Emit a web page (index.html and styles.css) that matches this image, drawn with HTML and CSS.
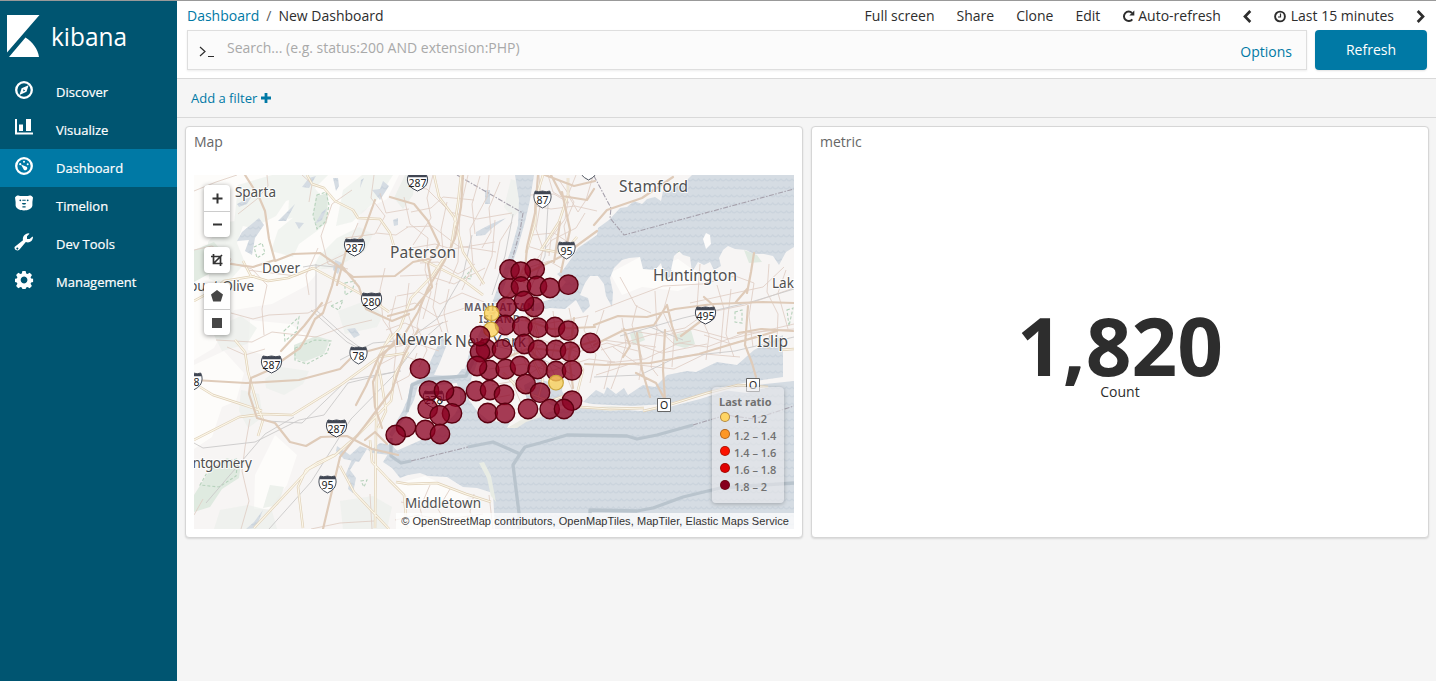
FILE: index.html
```html
<!DOCTYPE html>
<html lang="en">
<head>
<meta charset="utf-8">
<title>New Dashboard - Kibana</title>
<link rel="stylesheet" href="styles.css">
</head>
<body>
<div class="app">
  <aside class="sidebar">
    <div class="brand">
      <svg class="brand-mark" width="33" height="42" viewBox="0 0 33 42"><path fill="#fff" d="M0 0H32.500L0 37.500zM18.500 22.500C25.500 27 31 34 32 42H2z"/></svg>
      <svg class="brand-name" width="84" height="36" viewBox="0 0 84 36"><text x="0" y="24" textLength="76" lengthAdjust="spacingAndGlyphs">kibana</text></svg>
    </div>
    <nav class="menu">
      <a class="menu-item"><svg width="18" height="18" viewBox="0 0 18 18"><circle cx="9" cy="9" r="7.800" fill="none" stroke="#fff" stroke-width="2.300"/><path fill="#fff" fill-rule="evenodd" d="M13.600 4.200 11.500 10.800 4.500 14 6.600 7.200zM8.300 8.200v2.300l2-1.100z"/></svg><span>Discover</span></a>
      <a class="menu-item"><svg width="18" height="18" viewBox="0 0 18 18"><path fill="#fff" d="M0 0h2v13.500h16V15.500H0zM4 5.500h4V12H4zM11 0h5v12h-5z"/></svg><span>Visualize</span></a>
      <a class="menu-item active"><svg width="18" height="18" viewBox="0 0 18 18"><circle cx="9" cy="9" r="7.800" fill="none" stroke="#fff" stroke-width="2.300"/><g fill="#fff"><circle cx="9" cy="4.700" r="1"/><circle cx="5.200" cy="7.200" r="1.100"/><circle cx="12.700" cy="7.200" r="1"/><path d="M6 7.500 12 10a2.200 2.200 0 0 1-3 3z"/></g></svg><span>Dashboard</span></a>
      <a class="menu-item"><svg width="18" height="18" viewBox="0 0 18 18"><path fill="#fff" d="M0 2.500C1 .2 4 0 5 1h8c1-1 4-.8 5 1.500L17.400 7v3.500c-.6 3.500-4.400 4.900-8.400 4.900S1.200 14 .6 10.500V7z"/><g fill="#005571"><circle cx="5.300" cy="5.300" r=".9"/><circle cx="12.700" cy="5.300" r=".9"/><path d="M7.300 4.800h3.400v.9H7.300zM6.800 8h4.400l-1 1.600H7.800zM7.400 11.300h3.200v1.100H7.400z"/></g></svg><span>Timelion</span></a>
      <a class="menu-item"><svg width="18" height="18" viewBox="0 0 18 18"><path fill="#fff" fill-rule="evenodd" d="M13.500.2 14.500.8 12 3.300V6h2.600L17.500 3.400 18 4.300C17.700 8 14.500 10.400 10.800 9L4.500 16.500C2 19-1.500 16-.2 13.800L8 7.300C7.300 3.500 9.800.5 13.500.2zM2.300 14.600a1 1 0 1 0 .1 0z"/></svg><span>Dev Tools</span></a>
      <a class="menu-item"><svg width="18" height="18" viewBox="0 0 18 18"><path fill="#fff" fill-rule="evenodd" d="M7.400 0h3.200l.6 2.500 1.300.6 2.200-1.300 2.300 2.200-1.400 2.200.5 1.300 2 .3v3.100l-2 .6-.5 1.300 1.300 2.200-2.200 2.200-2.200-1.300-1.300.5-.6 1.600H7.400l-.6-1.600-1.300-.5-2.200 1.300-2.200-2.200 1.300-2.200-.6-1.300L0 10.900V7.800l1.800-.3.600-1.300L1.100 4l2.200-2.200 2.200 1.300 1.300-.6zM9 5.600a3.400 3.400 0 1 0 .1 0z"/></svg><span>Management</span></a>
    </nav>
  </aside>

  <main class="content">
    <header class="topbar">
      <div class="nav-row">
        <div class="crumbs"><a>Dashboard</a><i>/</i><span>New Dashboard</span></div>
        <div class="actions">
          <span>Full screen</span><span>Share</span><span>Clone</span><span>Edit</span>
          <span class="with-icon"><svg width="13" height="13" viewBox="0 0 13 13"><path d="M10.300 9.300A4.700 4.700 0 1 1 10 3" fill="none" stroke="#2d2d2d" stroke-width="2"/><path d="M12.300.6v5H7.300z" fill="#2d2d2d"/></svg>Auto-refresh</span>
          <svg class="chev" width="9" height="13" viewBox="0 0 9 13"><path d="M7.300 1 2 6.500 7.300 12" fill="none" stroke="#2d2d2d" stroke-width="2.700"/></svg>
          <span class="with-icon time"><svg width="12" height="13" viewBox="0 0 12 13"><circle cx="6" cy="6.500" r="4.900" fill="none" stroke="#2d2d2d" stroke-width="1.900"/><path d="M6.500 3.500V7H4" fill="none" stroke="#2d2d2d" stroke-width="1.200"/></svg>Last 15 minutes</span>
          <svg class="chev" width="9" height="13" viewBox="0 0 9 13"><path d="M1.700 1 7 6.500 1.700 12" fill="none" stroke="#2d2d2d" stroke-width="2.700"/></svg>
        </div>
      </div>
      <div class="search-row">
        <div class="search">
          <svg class="prompt" width="16" height="12" viewBox="0 0 16 12"><path d="M1 1 6 5.500 1 10M9 10.500h6" fill="none" stroke="#2d2d2d" stroke-width="1.200"/></svg>
          <span class="hint">Search... (e.g. status:200 AND extension:PHP)</span>
          <a class="options">Options</a>
        </div>
        <button class="refresh">Refresh</button>
      </div>
    </header>
    <div class="filters"><a>Add a filter <svg width="10" height="10" viewBox="0 0 10 10"><path d="M5 0v10M0 5h10" stroke="#0079a5" stroke-width="2.800"/></svg></a></div>

    <div class="panels">
      <section class="panel">
        <h2>Map</h2>
        <div class="map">
          <svg class="map-canvas" width="600" height="354" viewBox="194 175 600 354">
            <defs>
              <pattern id="waves" width="11" height="16" patternUnits="userSpaceOnUse"><rect width="11" height="16" fill="#d5dce3"/><path d="M0 3q2.750 3.500 5.500 0q2.750 3.500 5.500 0M-2.750 11q2.750 3.500 5.500 0q2.750 3.500 5.500 0q2.750 3.500 5.500 0" fill="none" stroke="#cbd4dd" stroke-width="1.300"/></pattern>
              <g id="shieldShape"><path d="M-8.500-8Q-4.500-6.500 0-8Q4.500-6.500 8.500-8Q12-2 8 4Q5 7 0 9Q-5 7-8 4Q-12-2-8.500-8z" fill="#fff" stroke="#404653" stroke-width="1"/><path d="M-8.500-8Q-4.500-6.500 0-8Q4.500-6.500 8.500-8L9.500-4.800H-9.500z" fill="#404653"/></g>
              <g id="dot"><circle r="9.700"/></g>
              <g id="parkways">
                <path d="M307 175l5 9 12 4 11 13 18 9 5 8 22 1 10 14 5 17M243 261l8 15 17 5 20-3 25-10 24 13 35 19 17 12M194 301l20-11 10-9 31-5M235 340l10 12 3 20 10 36 5 12-5 16M194 440l45-23 24-3 29 1 50-31 37-27 28-4M200 387l13 8 25 8 24 8M434 175l5 22 15 20 9 35 21 32M400 250l29 13 34 17 20 15M461 175l-3 28-7 45-19 28-21 22-11 30-16 18M391 334l-14 26 4 19 5 32-8 17M408 352l-13 22-4 27-33 34-24 21-25 13-55 59M334 455l-17 8-11 7-8 17 5 41M340 466l14 26 35 37M377 370l-1 60-1 98M396 482l12 2 29-1 29 11 25 8M370 440l2 22 17 18 15 15 3 33M543 175l-7 23-1 26-9 29M568 178v17l-9 27-18 28M540 249l23 4 14-16M530 310l8 25-5 25 10 20-5 19M503 373l19 18 28 10 25-9M574 356l9 14-6 24M643 411l22-5 42-13 31-8 30 2M580 407l30 2 34-1M780 350l14-1"/>
              </g>
            </defs>
            <rect x="194" y="175" width="600" height="354" fill="#f7f5f4"/>

            <!-- open country and woodland -->
            <g fill="#fdfcfa">
              <path d="M194 175h205l-12 24-25 12-14 36-20 14-22 25-34 18-38 6-20 38-20 12z"/>
              <path d="M194 365l30-14 20 22-8 28-14 6-10 30-18 12zM255 475l20-40 22 20-10 30-18 24h-15zM250 320l40 4 26 16-36 20-32-10zM640 257l18 10 20-8 14 10 20 8-34 14-36-4-20 8-12-22zM395 484l30-8 44 20-10 10-50-8z"/>
            </g>
            <g fill="#e9eee9">
              <path d="M238 185l34-10h56l-17 17-25 9-10 15-24 12-18-4zM278 230l28-23 23-7-8 28-22 16-6 13-22-6zM290 177l18 3 14 17-19 18-15 4zM343 190l19-15h31l-16 25-25 22-16 4zM319 256l18-18 22-11 14 7-8 17-30 17-23 2zM208 242l18-20 19-2-8 23 8 20-19 22-17-6z" opacity=".6"/>
              <path d="M338 311l30-11 15 15-6 12-32 7zM211 329l30-13 16 12-10 16-25 7zM265 379l16-12 28 4-6 13-19 11-18-7zM241 390l18 4 4 23-15 11-9-17zM340 501l33-5 19 11-5 22h-44zM220 510l28-5 24 6 5 18h-63zM511 179l8 3 4 24-10 12-9-11z" opacity=".6"/>
              <path d="M405 175h10l-2 20-10 14-9-11zM270 485l14 2-6 18-15 3z" opacity=".8"/>
              <path d="M316 196l12-3-1 30-10 6-4-14zM674 335l17-5 4 14-10 4-11-3zM630 334l11-4 4 10-12 5zM744 250l13 5 5 7-13 1zM294 345l22-9 14 4-6 14-20 8-10-4z" fill="#e0eae1"/>
              <path d="M194 495l16-25 17-12 14 5-2 15-17 11-12 18-16 5z" fill="#dfeae0"/>
              <path d="M194 250l20-8 10 12-8 16-22 12z" fill="#e2ebe2"/>
            </g>
            <g fill="none" stroke="#b7d2bc" stroke-width="1.100" stroke-dasharray="3 2">
              <path d="M317 195l9-3 3 13-3 16-9 8-4-14zM254 247l8-4 3 10-8 5zM284 331l15-14-2 14-12 10zM295 348l20-8 16 1-4 12-20 11-12-4zM345 283l10-2-3 10-7 4zM331 306l12-6-4 10zM200 485l8-14 18-10 12-2-2 17-17 11zM673 240l9 2v8l-7 3zM787 310l6-2-4 18zM735 312l7-2v13l-7-1zM464 278l7-8v9zM361 481l6-1-3 7z"/>
            </g>

            <!-- lakes, rivers, bays and ocean -->
            <g fill="url(#waves)">
              <path d="M692 175H794V247L786 252 779 265 773 256 764 254 754 254 746 250 735 249 728 246 723 250 719 258 721 266 714 270 710 262 704 265 698 262 692 272 690 257 683 255 679 251 674 256 671 270 676 273 665 280 661 263 655 270 643 269 640 257 629 258 622 260 614 268 610 278 613 292 612 307 606 296 604 284 598 276 590 276 585 283 580 295 588 298 590 306 583 313 576 300 565 309 550 308 530 312 527 306 552 299 566 282 557 274 563 270 571 259 578 248 597 235 598 228 609 220 620 208 627 207 634 201 642 204 647 199 655 197 661 201 663 191 671 191 677 184 684 183z"/>
              <path d="M515 175H534L530 200 525 222 517 250 510 270 503 290 498 308 490 325 483 345 474 372 464 372 470 350 477 338 487 318 495 295 503 272 511 250 518 225 519 200z"/>
              <path d="M794 381 765 384 735 388 700 399 665 408 640 411 600 408 580 407 560 409 540 415 507 428 512 419 500 422 488 420 478 412 469 400 470 384 474 368 462 369 455 378 460 392 460 404 455 414 445 424 430 436 412 444 396 451 390 440 388 454 383 462 392 468 400 478 408 475 420 473 428 476 447 477 463 487 477 488 493 493 495 529H794z"/>
              <path d="M442 337 449 339 440 362 434 375 455 376 466 370 464 382 440 385 418 386 414 400 406 416 392 437 389 434 402 412 408 398 411 383 424 377 430 362z"/>
              <path d="M524 385l12-6 14 3 13-3-1 12 9 14-16 2-13-8-15 3zM583 402l13-12 8 4 3-7 9 7 8-6 4 7 15-10 12 2 12-12 20-4 9 1 21-10 20 3 17-15 29-15v42l-28 4-28 5-35 11-26 7-34 2-40-2z"/>
              <path d="M390 455l-18-2-5-4-8 13-15-3-8-8 1-5 13 9 10-9 11 4 9-7 10 2 8 6zM345 476l5-12 3-7 4 2-7 11 6 8-3 15-5-4 2-9z"/>
              <path d="M242 232l17-14 5 7-9 13-3 17-7-4 4-11-12 1zM302 187l7-9 7-2-7 12zM333 178l5 0 1 8-3 5zM361 180l3-2-4 10zM372 190l8-1 3-8 6 5-9 14zM315 224l7-12 5-4-5 12zM295 222l9 1-5 6zM335 260l7 3-4 11-5-4zM237 204l15-8-5 8-8 3zM278 221l17-17-9 17zM485 190h5v14h-5zM476 232l15-8 15-6-15 11-6 6-9 1zM347 329l8-1 5 7-6 3zM256 528l7-18-9 12-8 7zM393 220l5-2v7l-4 1z"/>
            </g>
            <g fill="#fdfcfb"><path d="M703 239l3-6 4 2 1 9-5 5zM723 390l15-2 13-5 18 4-22 6z"/><path d="M640 409l-30 2-30-3 32-2zM507 428l19-11 22-7-4 6-18 6-9 6z" fill="#ebebe4"/><path d="M479 463l5-1 7 14 5 26-5-6-4-18z" fill="#e8ece4"/></g>

            <!-- ferry and shipping lanes -->
            <g fill="none" stroke="#b9c4cd" stroke-width="3.300" stroke-linejoin="round">
              <path d="M391 438l0 18 10 7 10-2M407 412l5-27 14-6 40-3 8-17M468 447l25-5 27 12 5-7 15-4 27-8 60 1 10 3 20-4 36-10M520 454l-7 11 6 48v16M590 529v-19l47 1 16-3 30-11 37-9 74-5"/>
            </g>
            <g fill="none" stroke="#a6a1ac" stroke-width="1.100" stroke-dasharray="5 1.500 1.500 1.500">
              <path d="M457 175l66 38-3 18-8 29M594 176l17 32-1 10 14 17 170-46M411 461l57-14M693 425l33-10 28 4 40-13"/>
            </g>

            <!-- local streets -->
            <g fill="none" stroke="#dfcec4" stroke-width=".85">
              <path d="M194 191l22-9 21-7M267 175l1 11-11 13-19 15M194 250l18-4 19 13-3 10M231 263l21 6 15 16-5 24 2 26M231 313l22 6 16-4 39-2 24-12M318 248l-12 27 3 20M358 223l-13 31-32 15-17 7-49-6M352 190l-20 14-11 32 7 28 20 5M374 175l-3 23 14 18-10 18-30 4M376 233l20 2 12-8M380 193l6 20 23-4M385 268l-5 22 3 30 11 16M302 175l10 9-3 18"/>
              <path d="M404 197l6 27 18 14-3 32 6 22-8 27M410 187l17 2 23 23 27 7 35-6M433 175l-6 23 4 20-18 27M447 202l-6 28 3 30-8 25M468 175l-8 35-2 52-9 22M489 175l-2 22-17 32 3 36-11 25M480 176l-8 28 3 30M495 220l-3 36-12 30M406 227l26-1 26 20 38 6M412 248l23-4 17 5 43-7M400 276l26-1 28 9 31-16M397 296l22-4 21 12 22-11 22 9M411 212l20-4 12-11 31 3M500 182l-11 26 2 24-9 16M512 222l-12 19-5 28M420 263l18-1 20 12 17-10"/>
              <path d="M390 310l25-7 22 14 28-9M386 330l19-7 16 7 27-9M395 347l20-4 24 8M381 364l19-10 20 8M396 296l-7 28 7 26-2 20 8 30M409 283l-3 24 8 25-11 21M423 298l-6 28 10 24-8 17M437 283l-4 24 9 25M449 289l-5 24 4 20M392 385l17-9 8-23"/>
              <path d="M539 175l2 25-5 29 7 20-7 29M548 175l5 17 15 9-3 18-14 19-2 18M559 180l15 22-10 24 4 25M576 175l-8 20 10 17 8-12 7-24M585 213l-9 15-24 12-15 19M535 206l16 3 24-3 22 5M532 235l22-2 17 11M530 267l19-6 14 8M530 195l24-1 15 9M527 246l23 7"/>
              <path d="M491 348l42-11 45 15 29-9 31 8M489 369l35-5 27 7 38-12 26 3M492 385l28-5 25-16 24-3M501 327l14 22-4 31 10 23M518 323l4 32 15 33M536 314l-4 28 13 20-5 28M553 311l3 28-6 27 8 15M569 308l6 30-10 35 9 21M588 315l-4 15 12 25-6 28M604 310l-9 28 16 23-7 28M489 399l21-4M482 404l30 2M516 320l34 3 38-7M505 339l27 8 44-12"/>
              <path d="M601 350l49-15 35-7 21-15 39-8 49-17M607 363l38-4 34-16 28 4 37-14 50-4M596 375l34-11 44 5 31-15 35 3M622 318l4 27-9 28-6 16M637 305l-5 20 10 33-3 22M655 291l2 39-6 37 7 9M670 287l-7 25 11 24-2 31M700 264l-3 44 12 27-3 25M717 285l7 24-4 45M731 289l-5 45 8 23M754 283l-5 33 4 31M769 264l-2 28 11 22-1 26M786 270l-8 23 10 36M620 277l16 29 15 7M595 312l31-12 37-14 39-2 33-8 19 7M621 329l42 7 30-7 37 10 64-15M625 340l37 13 45-9M603 340l53 7M655 326l19 18 17-3M704 335l27 9 24-7M690 303l45-10 28-6 21-20M613 347l26 18"/>
              <path d="M216 340l36 2 20-10 44 5 30-11 26-6M227 347l18 8 20-6M250 419l-5 28-3 24 7 30-8 28M194 515l9-16M395 520l24-5 22 5 42-6M401 502l25 6 42-6M430 485l-10 23 5 20M450 489l-12 20 11 20M474 494l-4 18 8 17M370 494l2 35M311 529l29-6 34-2M489 495l4 34"/>
            </g>

            <!-- railways -->
            <g fill="none" stroke="#cbcaca" stroke-width=".9">
              <path d="M345 268l-30-3-12 2M194 443l9 5 52-6 44-22 25-5 24-32 50-12M206 503l59-69 29-17M267 421l35 2 45-43 54-9M269 529l42-47 40-63 42-43 24-31 26-23M316 264v46l31 28 19 14M311 310l36 32 19 10M340 360l33-17 35-3 30-22 25-43 9-40M594 377l46-2 37-18 58-6 59-14M650 327l18 7 15 6M620 336l63-18 68-16 43-13M513 214l-8 42-13 39M492 345l44 11 39 20M548 205l-3 51-14 31"/>
            </g>

            <use href="#parkways" class="road-edge"/>
            <use href="#parkways" class="road-fill"/>

            <!-- motorways -->
            <g class="motorway">
              <path d="M245 175l14 22 6 14 4 28 6 22 18-7 27-1 17 12 16 12 42-1 18-14 20-4M337 265l-5 21-9 27-8 6-9 19-6 10-33 23-16 7-2 16 8 24 18 5 15 19 16 4 15-9 26-1 25 13 26 6M194 380l52 3 53-3 41-11 14-14 29-8 25-5M341 265l18 22 7 22 26 12 17-7M322 303l-18 23-23 25M231 264l22 3 22-7M375 200l-13 36-16 15-9 34M390 197l24 7 14 17 11 23-11 20 4 23-18 22-26 7M463 175l-2 32-6 31-11 24-16 26-10 24-17 28-22 16-13 30-10 19M418 330l-14 25-12 35-28 37-24 30-17 72M382 428l-7-21-2-25 11-28 16-19M365 440l10-8 12 12"/>
              <path d="M526 262l-10 24-26 31M538 175l-3 38-8 34-3 35M551 175l11 21 25 4 7-11M562 192l8 38-9 42M597 231l-33 24-18 9-27 13M560 222l-6 40M545 175l29 11 21-5M594 225l13-15 35-12 31-21M526 320l25 9 44-2M500 360l30-12 31 3 34-10M528 309l2 40 19 23M574 318l-5 39 4 31M594 325l24-9 29 1 28-8 38-5 50-2 31 1M594 345l28-14 32-6 13-20 5 21 5 14M585 364l20 1 45-2 49-9 33-10 45-13M624 329l6 17-7 11M637 333l5 37 8 27M665 330l-2 40 2 30M747 293l4-21 3-19M714 307l-9 11-24 18M748 306l-3 39 7 18 4 14M770 336l-2 12M738 333l23-4 32 2M713 305l-9-8M736 302l12-14M636 373l20 10 8 15"/>
            </g>

            <g class="place">
              <text x="235" y="197" font-size="13.500" textLength="41">Sparta</text>
              <text x="390" y="257.500" font-size="15.500" textLength="66">Paterson</text>
              <text x="619" y="191.500" font-size="15.500" textLength="69">Stamford</text>
              <text x="653" y="281" font-size="15.500" textLength="84">Huntington</text>
              <text x="262" y="272.500" font-size="13.500" textLength="38">Dover</text>
              <text x="177" y="290.500" font-size="13.500" textLength="77">Mount Olive</text>
              <text x="395" y="344.500" font-size="15.500" textLength="57">Newark</text>
              <text x="455" y="347" font-size="15.500" textLength="71">New York</text>
              <text x="757" y="347" font-size="15.500" textLength="31">Islip</text>
              <text x="772" y="287.500" font-size="13.500">Lake</text>
              <text x="173" y="467.500" font-size="13.500" textLength="79">Montgomery</text>
              <text x="405" y="507.500" font-size="13.500" textLength="76">Middletown</text>
              <g class="district"><text x="464" y="311" textLength="71">MANHATTAN</text><text x="479" y="323" textLength="41">ISLAND</text></g>
            </g>
            <g class="shield">
              <g transform="translate(417.500 182)"><use href="#shieldShape"/><text y="5">287</text></g>
              <g transform="translate(542.500 199)"><use href="#shieldShape" transform="scale(.85 1)"/><text y="4.500">87</text></g>
              <g transform="translate(566.500 250)"><use href="#shieldShape" transform="scale(.85 1)"/><text y="4.500">95</text></g>
              <g transform="translate(588.500 171)"><use href="#shieldShape" transform="scale(.85 1)"/></g>
              <g transform="translate(354.500 247)"><use href="#shieldShape"/><text y="4.500">287</text></g>
              <g transform="translate(371.500 301)"><use href="#shieldShape"/><text y="4.500">280</text></g>
              <g transform="translate(358.500 355)"><use href="#shieldShape" transform="scale(.85 1)"/><text y="4.500">78</text></g>
              <g transform="translate(271.500 364)"><use href="#shieldShape"/><text y="4.500">287</text></g>
              <g transform="translate(336.500 428)"><use href="#shieldShape"/><text y="4.500">287</text></g>
              <g transform="translate(327.500 484)"><use href="#shieldShape" transform="scale(.85 1)"/><text y="4.500">95</text></g>
              <g transform="translate(193.500 381)"><use href="#shieldShape" transform="scale(.85 1)"/><text y="4.500">78</text></g>
              <g transform="translate(705.500 315)"><use href="#shieldShape"/><text y="4.500">495</text></g>
              <g transform="translate(433.500 399)"><use href="#shieldShape"/><text y="4.500">278</text></g>
              <g transform="translate(664 405)"><path d="M-6.500-6.500h13v13h-13z" fill="#fff" stroke="#666"/><text y="4">O</text></g>
              <g transform="translate(753 385)"><path d="M-6.500-6.500h13v13h-13z" fill="#fff" stroke="#666"/><text y="4">O</text></g>
            </g>

            <!-- aggregated samples -->
            <g class="dots-high">
              <use href="#dot" x="509.500" y="269.500"/><use href="#dot" x="534.700" y="269"/><use href="#dot" x="520.700" y="271.700"/><use href="#dot" x="508.500" y="288.300"/><use href="#dot" x="521" y="286.500"/><use href="#dot" x="537" y="286"/><use href="#dot" x="550" y="288"/><use href="#dot" x="568.300" y="284.700"/><use href="#dot" x="506.500" y="307"/><use href="#dot" x="534" y="307"/><use href="#dot" x="524" y="301"/>
              <use href="#dot" x="505" y="325"/><use href="#dot" x="522.300" y="326.500"/><use href="#dot" x="538" y="327.700"/><use href="#dot" x="555" y="327"/><use href="#dot" x="568.300" y="330.700"/><use href="#dot" x="590.300" y="342.800"/>
              <use href="#dot" x="486" y="349"/><use href="#dot" x="480" y="352"/><use href="#dot" x="502" y="349.500"/><use href="#dot" x="524.300" y="344"/><use href="#dot" x="538" y="350"/><use href="#dot" x="556" y="350"/><use href="#dot" x="570" y="351.700"/>
              <use href="#dot" x="489.300" y="370"/><use href="#dot" x="477" y="366"/><use href="#dot" x="505.700" y="369"/><use href="#dot" x="520" y="366"/><use href="#dot" x="537.700" y="369"/><use href="#dot" x="556" y="371"/><use href="#dot" x="572" y="370.300"/>
              <use href="#dot" x="525.700" y="384"/><use href="#dot" x="540" y="392.700"/><use href="#dot" x="476" y="391"/><use href="#dot" x="490" y="390"/><use href="#dot" x="504" y="394.700"/><use href="#dot" x="572" y="400.700"/><use href="#dot" x="528" y="409"/><use href="#dot" x="549.700" y="409"/><use href="#dot" x="564" y="409"/><use href="#dot" x="487.700" y="413"/><use href="#dot" x="505" y="413"/>
              <use href="#dot" x="420" y="368.700"/><use href="#dot" x="456" y="396.700"/><use href="#dot" x="429" y="390.700"/><use href="#dot" x="444" y="390.700"/><use href="#dot" x="427.700" y="408.700"/><use href="#dot" x="452" y="413.300"/><use href="#dot" x="439.700" y="415.300"/><use href="#dot" x="406" y="427"/><use href="#dot" x="395.700" y="435"/><use href="#dot" x="425.300" y="430"/><use href="#dot" x="440" y="434"/>
            </g>
            <g class="dots-low"><circle cx="491.700" cy="313.300" r="7.300"/><circle cx="491" cy="329.500" r="7.300"/><circle cx="556" cy="382.700" r="7.300"/></g>
            <g class="dots-high"><use href="#dot" x="480" y="336"/></g>
          </svg>

          <div class="controls">
            <div class="control"><b><svg width="11" height="11" viewBox="0 0 11 11"><path d="M5.500 0.500v10M.500 5.500h10" stroke="#333" stroke-width="2"/></svg></b><b><svg width="11" height="11" viewBox="0 0 11 11"><path d="M1 5.500h9" stroke="#333" stroke-width="2"/></svg></b></div>
            <div class="control"><b><svg width="12" height="12" viewBox="0 0 12 12"><path d="M2.500 0v9.500H11.500M0 2.500H9.500V12M3 9 11 1" fill="none" stroke="#333" stroke-width="1.700"/></svg></b></div>
            <div class="control"><b><svg width="12" height="12" viewBox="0 0 12 12"><path d="M6 0 12 4.600 9.800 11.500H2.200L0 4.600z" fill="#464646"/></svg></b><b><svg width="10" height="10" viewBox="0 0 10 10"><path d="M0 0h10v10H0z" fill="#464646"/></svg></b></div>
          </div>
          <div class="legend">
            <strong>Last ratio</strong>
            <div><i class="c1"></i>1 – 1.2</div>
            <div><i class="c2"></i>1.2 – 1.4</div>
            <div><i class="c3"></i>1.4 – 1.6</div>
            <div><i class="c4"></i>1.6 – 1.8</div>
            <div><i class="c5"></i>1.8 – 2</div>
          </div>
          <div class="attribution">© OpenStreetMap contributors, OpenMapTiles, MapTiler, Elastic Maps Service</div>
        </div>
      </section>
      <section class="panel">
        <h2>metric</h2>
        <div class="metric"><div class="metric-value">1,820</div><div class="metric-label">Count</div></div>
      </section>
    </div>
  </main>
</div>
</body>
</html>
```
FILE: styles.css
```css
* { box-sizing: border-box; }
body {
  margin: 0;
  font: 14px/20px "Open Sans", "Noto Sans", sans-serif;
  color: #2d2d2d;
  background: #f5f5f5;
}
.app { display: flex; height: 681px; border-top: 1px solid #999; overflow: hidden; }
.sidebar { width: 177px; background: #005571; color: #fff; flex: none; }
.brand { display: flex; height: 72px; padding: 14px 0 0 7px; }
.brand-name { margin: 7px 0 0 11px; }
.brand-name text { font: 500 26px "Open Sans", sans-serif; fill: #fff; }
.menu-item { display: flex; height: 38px; padding-left: 15px; font-size: 13px; font-weight: 500; -webkit-text-stroke: .2px #fff; }
.menu-item svg { margin: 8px 23px 0 0; overflow: visible; }
.menu-item span { padding-top: 9px; }
.menu-item.active { background: #0079a5; }

.content { flex: 1; min-width: 0; }
.topbar { height: 78px; background: #fff; border-bottom: 1px solid #d9d9d9; }
.nav-row { display: flex; justify-content: space-between; height: 29px; padding: 5px 11px 0 10px; }
.crumbs { display: flex; }
.crumbs a, .options, .filters a { color: #0079a5; }
.crumbs i { font-style: normal; margin: 0 7px; color: #5a5a5a; }
.actions { display: flex; gap: 22px; }
.with-icon { display: flex; }
.with-icon svg { margin: 4px 3px 0 0; }
.with-icon.time svg { margin-right: 5px; }
.chev { margin-top: 4px; }
.search-row { display: flex; padding: 0 9px 0 10px; gap: 8px; }
.search { display: flex; flex: 1; height: 40px; border: 1px solid #dedede; background: #fbfbfb; box-shadow: 0 1px 2px rgba(0, 0, 0, .08); padding: 0 14px 0 11px; }
.prompt { margin: 15px 12px 0 0; }
.hint { color: #a9a9a9; padding-top: 7px; font-size: 14px; flex: 1; }
.options { padding-top: 11px; }
.refresh { width: 112px; height: 40px; border: 0; border-radius: 4px; background: #0079a5; color: #fff; font: inherit; box-shadow: 0 1px 2px rgba(0, 0, 0, .12); }
.filters { height: 39px; padding: 9px 14px; border-bottom: 1px solid #d9d9d9; font-size: 13px; }

.panels { display: flex; gap: 8px; padding: 8px 7px 0 8px; }
.panel { flex: 1; height: 412px; padding: 0 8px; background: #fff; border: 1px solid #d6d6d6; border-radius: 4px; box-shadow: 0 1px 2px rgba(0, 0, 0, .12); }
.panel h2 { height: 48px; margin: 0; padding-top: 5px; font-size: 14px; font-weight: 400; color: #666; }
.map { position: relative; width: 600px; height: 354px; overflow: hidden; }
.map-canvas { display: block; }
.road-edge, .road-fill, .motorway { fill: none; stroke-linejoin: round; }
.road-edge { stroke: #dfd0b8; stroke-width: 2.500px; }
.road-fill { stroke: #fbf6e8; stroke-width: 1.200px; }
.motorway { stroke: #dfcbb9; stroke-width: 2.200px; stroke-linecap: round; }
.place text { font-family: "Noto Sans", sans-serif; fill: #505050; stroke: #fff; stroke-width: 2px; stroke-opacity: .85; paint-order: stroke; stroke-linejoin: round; }
.place .district text { font-size: 10px; font-weight: 700; fill: #655f68; }
.shield text { font: 10.500px "Noto Sans", sans-serif; fill: #222; text-anchor: middle; }
.dots-high { fill: #8b0021; fill-opacity: .76; stroke: #5c0010; stroke-width: 1.400; }
.dots-low { fill: #fed35a; fill-opacity: .78; stroke: #cca63b; stroke-width: 1.200; }

.controls { position: absolute; left: 10px; top: 10px; display: flex; flex-direction: column; gap: 10px; }
.control { width: 26px; border-radius: 4px; background: #fff; box-shadow: 0 1px 5px rgba(0, 0, 0, .4); }
.control b { display: flex; align-items: center; justify-content: center; height: 26px; }
.control b + b { border-top: 1px solid #ccc; }
.legend { position: absolute; right: 10px; top: 212px; width: 72px; height: 116px; padding: 6px 0 0 7px; border-radius: 4px; background: rgba(232, 232, 235, .6); box-shadow: 0 1px 4px rgba(0, 0, 0, .25); font-size: 11px; line-height: 17px; font-weight: 600; color: #707070; white-space: nowrap; }
.legend strong { display: block; font-weight: 700; line-height: 17px; }
.legend div { display: flex; }
.legend i { width: 10px; height: 10px; margin: 2px 4px 0 1px; border-radius: 50%; border: 1px solid rgba(70, 20, 0, .4); }
.c1 { background: #fed564; }
.c2 { background: #fd9727; }
.c3 { background: #fc1200; }
.c4 { background: #e00000; }
.c5 { background: #87001d; }
.attribution { position: absolute; right: 0; bottom: 0; height: 16px; padding: 0 5px; background: rgba(255, 255, 255, .75); font: 11px/16px "Liberation Sans", Arial, sans-serif; letter-spacing: .07px; color: #333; white-space: nowrap; }

.metric { display: flex; flex-direction: column; align-items: center; padding-top: 130px; }
.metric-value { font-size: 80px; line-height: 80px; font-weight: 700; }
.metric-label { line-height: 20px; margin-top: -3px; }
```
